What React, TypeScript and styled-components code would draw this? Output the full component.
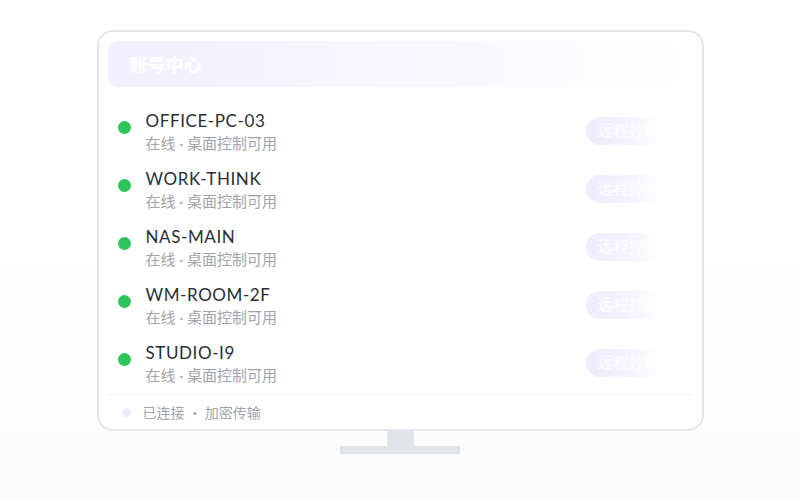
import * as React from 'react';
import styled, { createGlobalStyle } from 'styled-components';

const GlobalStyle = createGlobalStyle`
  html, body {
    margin: 0;
    padding: 0;
  }
  body {
    font-family: Lato, "Noto Sans CJK SC", sans-serif;
  }
`;

const Page = styled.div`
  width: 800px;
  height: 500px;
  background: linear-gradient(180deg, #ffffff 0%, #ffffff 45%, #fcfcfd 100%);
  display: flex;
  flex-direction: column;
  align-items: center;
  padding-top: 30px;
  box-sizing: border-box;
`;

const Screen = styled.div`
  width: 607px;
  height: 401px;
  box-sizing: border-box;
  border: 2px solid #e4e6eb;
  border-radius: 16px;
  background: #ffffff;
  padding: 9px 10px 0 9px;
  display: flex;
  flex-direction: column;
`;

const Header = styled.div`
  height: 46px;
  border-radius: 10px;
  background: linear-gradient(90deg, #f2efff 0%, #f8f6ff 45%, #ffffff 100%);
  display: flex;
  align-items: center;
  justify-content: space-between;
  padding: 0 22px;
  color: #ffffff;
  font-family: "Noto Sans CJK SC", sans-serif;
  font-weight: 700;
  font-size: 18px;
`;

const HeaderSide = styled.span`
  font-size: 14px;
  font-weight: 400;
  margin-right: 10px;
`;

const List = styled.div`
  display: flex;
  flex-direction: column;
  gap: 18px;
  padding: 24px 0 0 10px;
  flex: 1;
`;

const Row = styled.div`
  display: flex;
  align-items: center;
  height: 40px;
`;

const Dot = styled.span<{ $color: string; $size: number }>`
  width: ${(p) => p.$size}px;
  height: ${(p) => p.$size}px;
  border-radius: 50%;
  background: ${(p) => p.$color};
  flex: none;
`;

const StatusDot = styled(Dot)`
  align-self: flex-start;
  margin-top: 10px;
`;

const Info = styled.div`
  display: flex;
  flex-direction: column;
  margin-left: 15px;
  flex: 1;
`;

const Name = styled.div`
  font-family: Lato, "Noto Sans CJK SC", sans-serif;
  font-size: 17px;
  line-height: 21px;
  letter-spacing: 0.6px;
  color: #2a2e35;
`;

const Sub = styled.div`
  font-family: Lato, "Noto Sans CJK SC", sans-serif;
  font-size: 15px;
  line-height: 20px;
  margin-top: 2px;
  color: #9fa4ac;
`;

const Control = styled.button`
  width: 74px;
  height: 28px;
  margin-right: 32px;
  border: none;
  border-radius: 14px 0 0 14px;
  padding: 0 0 0 11px;
  overflow: hidden;
  white-space: nowrap;
  text-align: left;
  background: linear-gradient(90deg, #efecff 0%, #f4f2ff 55%, #ffffff 100%);
  color: #ffffff;
  font-family: serif;
  font-size: 16px;
`;

const Footer = styled.div`
  border-top: 1px solid #eef0f3;
  height: 34px;
  display: flex;
  align-items: center;
  padding-left: 14px;
  gap: 12px;
  font-family: "Noto Sans CJK SC", sans-serif;
  font-size: 14px;
  color: #9fa4ac;
`;

const Neck = styled.div`
  width: 27px;
  height: 15px;
  background: #e1e5e9;
`;

const Base = styled.div`
  width: 120px;
  height: 8px;
  background: #e1e5e9;
`;

const devices = ['OFFICE-PC-03', 'WORK-THINK', 'NAS-MAIN', 'WM-ROOM-2F', 'STUDIO-I9'];

export default function App() {
  return (
    <Page>
      <GlobalStyle />
      <Screen>
        <Header>
          <span>账号中心</span>
          <HeaderSide>设置</HeaderSide>
        </Header>
        <List>
          {devices.map((d) => (
            <Row key={d}>
              <StatusDot $color="#2ec45c" $size={13} />
              <Info>
                <Name>{d}</Name>
                <Sub>在线 · 桌面控制可用</Sub>
              </Info>
              <Control>远程控制</Control>
            </Row>
          ))}
        </List>
        <Footer>
          <Dot $color="#eeebfd" $size={9} />
          <span>已连接 · 加密传输</span>
        </Footer>
      </Screen>
      <Neck />
      <Base />
    </Page>
  );
}
